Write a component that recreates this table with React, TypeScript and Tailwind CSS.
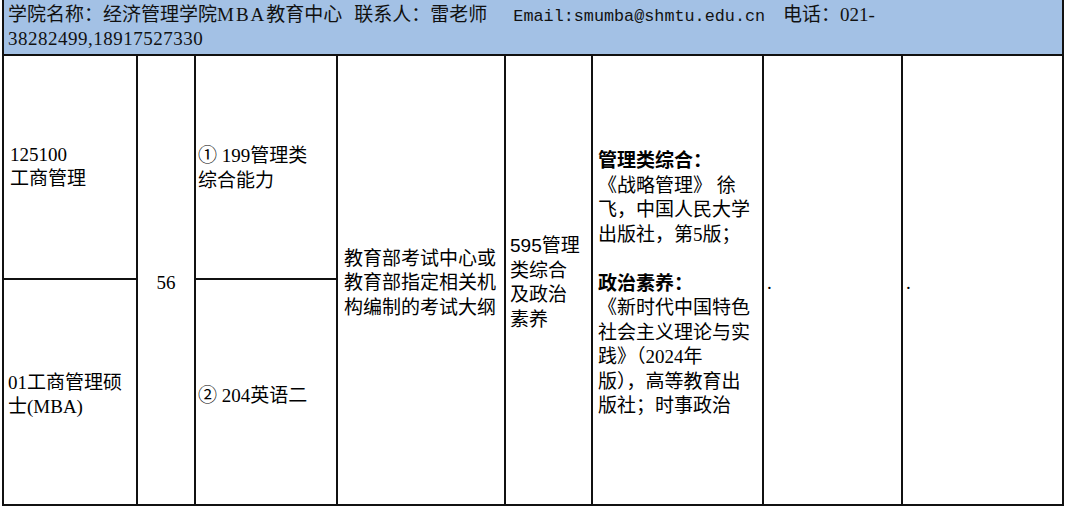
import React from "react";

const SERIF = '"Liberation Serif", "Noto Sans CJK SC", serif';

function Cell({ className = "", children }: { className?: string; children?: React.ReactNode }) {
  return (
    <div
      className={"bg-white flex items-center text-[19px] leading-[24.5px] text-black " + className}
      style={{ fontFamily: SERIF }}
    >
      <div className="whitespace-nowrap">{children}</div>
    </div>
  );
}

export default function App() {
  return (
    <div className="w-[1070px] h-[516px] bg-white" style={{ fontFamily: SERIF }}>
      <div className="ml-[2px] w-[1062px] grid grid-cols-[132px_56px_140px_166px_85px_169px_137px_159px] grid-rows-[54px_222px_224px] gap-[2px] bg-[#111] px-[2px] pb-[2px]">
        <div className="col-span-8 row-start-1 bg-[#a3c1e5] pl-[4px] pt-[4px] text-[19px] leading-[22px] text-[#111]">
          <div className="whitespace-nowrap">
            <span>
              学院名称：经济管理学院<span className="tracking-[2px]">MBA</span>教育中心
            </span>
            <span className="ml-[12px]">联系人：雷老师</span>
            <span
              className="ml-[26px] text-[16.8px]"
              style={{ fontFamily: '"Liberation Mono", monospace' }}
            >
              Email:smumba@shmtu.edu.cn
            </span>
            <span className="ml-[18px]">电话：021-</span>
          </div>
          <div className="whitespace-nowrap tracking-[0.5px]">38282499,18917527330</div>
        </div>

        <Cell className="col-start-1 row-start-2 pl-[6px]">
          125100
          <br />
          工商管理
        </Cell>
        <Cell className="col-start-2 row-start-2 row-span-2 justify-center pt-[6px]">56</Cell>
        <Cell className="col-start-3 row-start-2 pl-[2px] pt-[3px]">
          ① 199管理类
          <br />
          综合能力
        </Cell>
        <Cell className="col-start-4 row-start-2 row-span-2 pl-[6px] pt-[7px]">
          教育部考试中心或
          <br />
          教育部指定相关机
          <br />
          构编制的考试大纲
        </Cell>
        <Cell className="col-start-5 row-start-2 row-span-2 pl-[4px] pt-[6px]">
          <span style={{ fontFamily: '"Liberation Sans", "Noto Sans CJK SC", sans-serif' }}>
            595管理
            <br />
            类综合
            <br />
            及政治
            <br />
            素养
          </span>
        </Cell>
        <Cell className="col-start-6 row-start-2 row-span-2 pl-[5px] pt-[8px]">
          <span className="font-bold">管理类综合：</span>
          <br />
          《战略管理》 徐
          <br />
          飞，中国人民大学
          <br />
          出版社，第5版；
          <br />
          &nbsp;
          <br />
          <span className="font-bold">政治素养：</span>
          <br />
          《新时代中国特色
          <br />
          社会主义理论与实
          <br />
          践》（2024年
          <br />
          版），高等教育出
          <br />
          版社；时事政治
        </Cell>
        <Cell className="col-start-7 row-start-2 row-span-2 pl-[3px] pt-[6px]">.</Cell>
        <Cell className="col-start-8 row-start-2 row-span-2 pl-[3px] pt-[6px]">.</Cell>

        <Cell className="col-start-1 row-start-3 pl-[4px] pt-[6px]">
          01工商管理硕
          <br />
          士(MBA)
        </Cell>
        <Cell className="col-start-3 row-start-3 pl-[2px] pt-[8px]">② 204英语二</Cell>
      </div>
    </div>
  );
}
